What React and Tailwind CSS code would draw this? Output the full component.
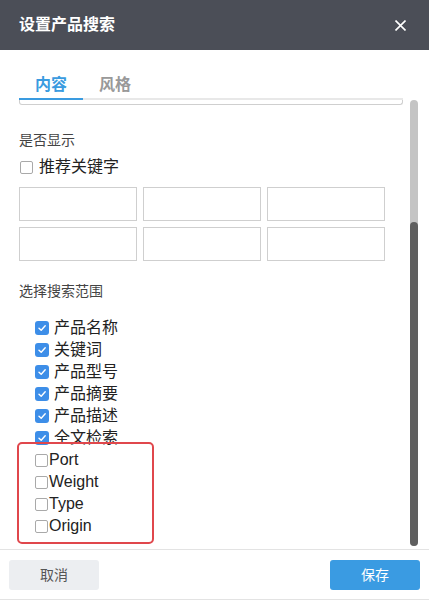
import { useState } from 'react';

const FONT = { fontFamily: '"Liberation Sans", "Noto Sans CJK SC", sans-serif' };

const scopes = [
  { label: '产品名称', checked: true },
  { label: '关键词', checked: true },
  { label: '产品型号', checked: true },
  { label: '产品摘要', checked: true },
  { label: '产品描述', checked: true },
  { label: '全文检索', checked: true },
];

const extraFields = ['Port', 'Weight', 'Type', 'Origin'];

function CheckedBox() {
  return (
    <span className="flex h-[14px] w-[14px] items-center justify-center rounded-[3px] bg-[#3d8ee8]">
      <svg width="10" height="10" viewBox="0 0 10 10" fill="none">
        <path d="M2 5.2 L4.2 7.3 L8.2 2.8" stroke="white" strokeWidth="1.4" strokeLinecap="round" strokeLinejoin="round" />
      </svg>
    </span>
  );
}

function EmptyBox() {
  return <span className="block h-[13px] w-[13px] rounded-[2px] border border-[#a9a9a9] bg-white" />;
}

function App() {
  const [tab, setTab] = useState('content');

  return (
    <div className="flex h-[600px] w-[429px] flex-col bg-white text-[#333]" style={FONT}>
      {/* header */}
      <header className="flex h-[50px] shrink-0 items-center justify-between bg-[#4b4e57] pl-[19px] pr-[23px]">
        <h1 className="text-[16px] font-bold text-white">设置产品搜索</h1>
        <svg width="11" height="11" viewBox="0 0 11 11">
          <path d="M0.5 0.5 L10.5 10.5 M10.5 0.5 L0.5 10.5" stroke="white" strokeWidth="1.6" />
        </svg>
      </header>

      {/* tabs */}
      <div className="mt-[18px] ml-[19px] mr-[26px] flex border-b-2 border-[#e8e8e8]">
        <button
          onClick={() => setTab('content')}
          className={`-mb-[2px] h-[32px] border-b-2 px-4 pt-[3px] text-[16px] font-bold ${tab === 'content' ? 'border-[#3a9be0] text-[#3a9be0]' : 'border-transparent text-[#999]'}`}
        >
          内容
        </button>
        <button
          onClick={() => setTab('style')}
          className={`-mb-[2px] h-[32px] border-b-2 px-4 pt-[3px] text-[16px] font-bold ${tab === 'style' ? 'border-[#3a9be0] text-[#3a9be0]' : 'border-transparent text-[#999]'}`}
        >
          风格
        </button>
      </div>

      {/* body */}
      <div className="flex min-h-0 flex-1">
        <div className="flex-1 overflow-hidden pl-[19px] pr-[7px]">
          <div className="h-[5px] rounded-b-[3px] border border-t-0 border-[#cfcfcf]" />

          <div className="mt-[25px] text-[14px] leading-[20px] text-[#444]">是否显示</div>
          <label className="mt-[6px] flex h-[22px] items-center gap-[6px] pl-px">
            <EmptyBox />
            <span className="text-[16px] text-[#222]">推荐关键字</span>
          </label>

          <div className="mt-[9px] grid w-[366px] grid-cols-3 gap-[6px]">
            {Array.from({ length: 6 }).map((_, i) => (
              <input key={i} className="h-[34px] w-full border border-[#cfcfcf] outline-none" />
            ))}
          </div>

          <div className="mt-[20px] text-[14px] leading-[20px] text-[#444]">选择搜索范围</div>

          <div className="mt-[16px] pl-[16px]">
            {scopes.map((s) => (
              <div key={s.label} className="flex h-[22px] items-center gap-[5px]">
                <CheckedBox />
                <span className="text-[16px] text-[#222]">{s.label}</span>
              </div>
            ))}
          </div>

          <div className="relative">
            <div className="pl-[16px]">
              {extraFields.map((f) => (
                <div key={f} className="flex h-[22px] items-center">
                  <EmptyBox />
                  <span className="ml-px text-[16px] text-[#222]">{f}</span>
                </div>
              ))}
            </div>
            <div className="pointer-events-none absolute -top-[7px] -bottom-[7px] -left-[2px] w-[137px] rounded-[5px] border-2 border-[#e0474c]" />
          </div>
        </div>

        {/* scrollbar */}
        <div className="mr-[11px] flex w-[8px] flex-col pb-[3px]">
          <div className="flex flex-1 flex-col rounded-full bg-[#c4c4c4]">
            <div className="mt-auto h-[324px] rounded-full bg-[#5f5f5f]" />
          </div>
        </div>
      </div>

      {/* footer */}
      <footer className="flex h-[51px] shrink-0 items-start justify-between border-y border-[#e3e3e3] px-[9px] pt-[10px]">
        <button className="h-[30px] w-[90px] rounded-[3px] bg-[#eceef1] text-[14px] text-[#555]">取消</button>
        <button className="h-[30px] w-[90px] rounded-[3px] bg-[#3a9be2] text-[14px] text-white">保存</button>
      </footer>
    </div>
  );
}

export default App;
